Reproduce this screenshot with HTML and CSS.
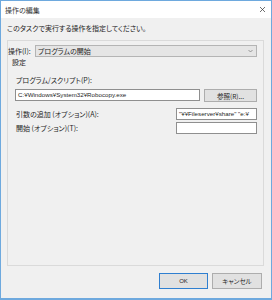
FILE: index.html
```html
<!DOCTYPE html>
<html lang="ja">
<head>
<meta charset="utf-8">
<title>操作の編集</title>
<link rel="stylesheet" href="styles.css">
</head>
<body>
<div class="window">
  <div class="titlebar">
    <span class="title">操作の編集</span>
    <svg class="close" width="7" height="7" viewBox="0 0 7 7"><path d="M1 1L6 6M6 1L1 6" stroke="#333" stroke-width="0.7" fill="none"/></svg>
  </div>
  <div class="content">
    <p class="intro">このタスクで実行する操作を指定してください。</p>
    <div class="panel">
      <div class="action-row">
        <span class="action-label">操作(I):</span>
        <div class="combo">
          <span>プログラムの開始</span>
          <svg class="chevron" width="5" height="4" viewBox="0 0 5 4"><path d="M0.5 1L2.5 3L4.5 1" stroke="#777" stroke-width="0.7" fill="none"/></svg>
        </div>
      </div>
      <div class="settings">
        <div class="group-label">設定</div>
        <div class="field-label">プログラム/スクリプト(P):</div>
        <div class="program-row">
          <div class="textbox wide">C:¥Windows¥System32¥Robocopy.exe</div>
          <div class="btn browse">参照(R)...</div>
        </div>
        <div class="opt-row">
          <span class="opt-label">引数の追加 (オプション)(A):</span>
          <div class="textbox small">"¥¥Fileserver¥share" "e:¥</div>
        </div>
        <div class="opt-row">
          <span class="opt-label">開始 (オプション)(T):</span>
          <div class="textbox small"></div>
        </div>
      </div>
    </div>
    <div class="buttons">
      <div class="btn ok">OK</div>
      <div class="btn cancel">キャンセル</div>
    </div>
  </div>
</div>
</body>
</html>
```
FILE: styles.css
```css
* { box-sizing: border-box; }
html, body { margin: 0; padding: 0; }
body {
  width: 272px;
  height: 300px;
  background: #f0f0f0;
  font-family: "Noto Sans CJK JP", "Noto Sans", sans-serif;
  font-feature-settings: "palt";
  font-size: 7px;
  color: #1e1e1e;
}
.window {
  width: 272px;
  height: 300px;
  border: 1px solid #6ea9de;
  border-bottom-width: 2px;
  background: #f0f0f0;
  display: flex;
  flex-direction: column;
}
.titlebar {
  height: 17px;
  background: #fff;
  display: flex;
  align-items: center;
  justify-content: space-between;
  padding: 0 5px 0 4px;
}
.title { line-height: 10px; color: #333; }
.close { display: block; }
.content {
  flex: 1;
  padding: 5px 7px 0 6px;
  display: flex;
  flex-direction: column;
}
.intro {
  margin: 0;
  line-height: 10px;
  height: 10px;
}
.panel {
  margin-top: 7px;
  height: 226px;
  border: 1px solid #dadada;
  padding: 4px 6px 0 0;
}
.action-row {
  display: flex;
  align-items: center;
  height: 12px;
}
.action-label {
  width: 27px;
  line-height: 10px;
}
.combo {
  flex: 1;
  height: 12px;
  border: 1px solid #b4b4b4;
  background: #e5e5e5;
  display: flex;
  align-items: center;
  justify-content: space-between;
  padding: 0 3px 0 2px;
  line-height: 10px;
}
.chevron { display: block; }
.settings {
  padding-left: 7px;
}
.group-label {
  margin-left: -3px;
  line-height: 10px;
  height: 10px;
}
.field-label {
  margin-top: 8px;
  margin-left: 1px;
  line-height: 10px;
  height: 10px;
}
.program-row {
  margin-top: 4px;
  display: flex;
  align-items: flex-start;
  gap: 4px;
}
.textbox {
  height: 12px;
  border: 1px solid #8f8f8f;
  background: #fff;
  font-family: "Liberation Sans", "Noto Sans CJK JP", sans-serif;
  font-size: 6.2px;
  line-height: 10px;
  padding: 0 2px;
  white-space: nowrap;
  overflow: hidden;
}
.textbox.wide { width: 185px; }
.textbox.small { width: 81px; }
.btn {
  height: 13px;
  border: 1px solid #adadad;
  background: #e1e1e1;
  display: flex;
  align-items: center;
  justify-content: center;
  line-height: 10px;
  font-size: 6.5px;
}
.browse { width: 53px; }
.opt-row {
  display: flex;
  align-items: center;
  justify-content: space-between;
  margin-top: 6px;
  padding-left: 1px;
}
.opt-row + .opt-row { margin-top: 2px; }
.opt-label { line-height: 10px; }
.buttons {
  margin-top: 7px;
  display: flex;
  justify-content: flex-end;
  gap: 4px;
  padding-right: 2px;
}
.ok {
  width: 49px;
  height: 16px;
  border: 1px solid #2f7fd0;
  font-family: "Liberation Sans", sans-serif;
  font-size: 6px;
}
.cancel {
  width: 50px;
  height: 16px;
}
```
